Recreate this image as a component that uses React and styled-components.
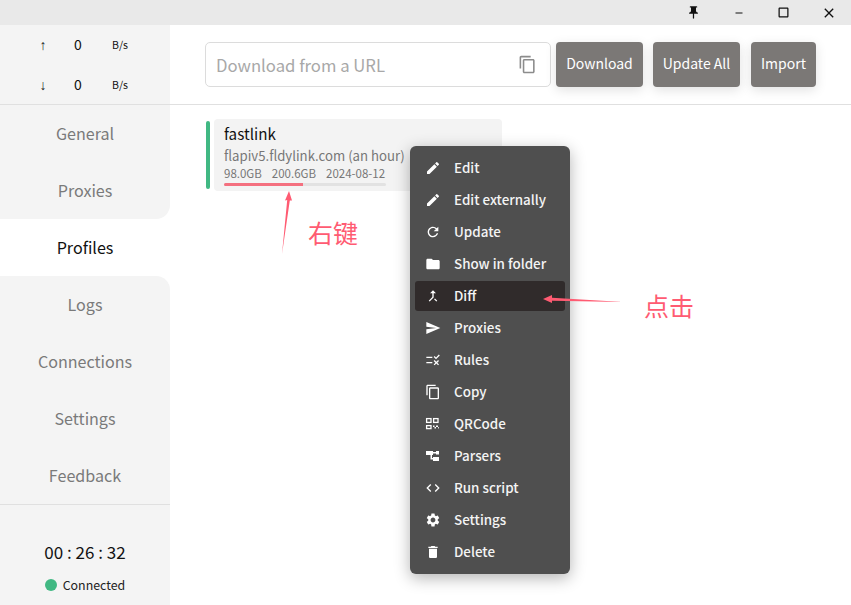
import React from 'react';
import styled, { createGlobalStyle } from 'styled-components';
import {
  MdEdit, MdRefresh, MdFolder, MdMergeType, MdSend, MdRule, MdContentCopy,
  MdCode, MdSettings, MdDelete, MdPushPin, MdCropSquare, MdClose, MdRemove,
} from 'react-icons/md';

const FONT = '"Noto Sans CJK SC", "Noto Sans", sans-serif';
const RED = '#ff5b72';

const GlobalStyle = createGlobalStyle`
  html, body { margin: 0; padding: 0; height: 100%; overflow: hidden; background: #fff; }
  body { font-family: ${FONT}; }
  * { box-sizing: border-box; }
`;

const Page = styled.div`
  position: relative;
  width: 851px;
  height: 605px;
  display: flex;
  flex-direction: column;
  overflow: hidden;
`;

const TitleBar = styled.div`
  height: 25px;
  background: #e9e9e9;
  display: flex;
  justify-content: flex-end;
  align-items: center;
  flex: none;
`;

const TitleButton = styled.div`
  width: 45px;
  display: flex;
  justify-content: center;
  align-items: center;
  color: #111;
  font-size: ${p => p.$size || 14}px;
`;

const Body = styled.div`
  flex: 1;
  display: flex;
  min-height: 0;
`;

const Sidebar = styled.aside`
  width: 170px;
  flex: none;
  display: flex;
  flex-direction: column;
  background: #fff;
`;

const Traffic = styled.div`
  height: 79px;
  background: #f4f4f4;
  display: flex;
  flex-direction: column;
  justify-content: center;
  gap: 14px;
  flex: none;
`;

const TrafficRow = styled.div`
  display: grid;
  grid-template-columns: 30px 40px 1fr;
  padding-left: 28px;
  height: 26px;
  align-items: center;
  color: #111;
`;

const TrafficArrow = styled.span`
  font-family: "Liberation Sans", sans-serif;
  font-size: 14px;
  color: #222;
  text-align: center;
`;

const TrafficValue = styled.span`
  font-size: 14px;
  text-align: center;
  padding-bottom: 2px;
`;

const TrafficUnit = styled.span`
  font-size: 10.5px;
  padding-left: 14px;
`;

const Nav = styled.nav`
  border-top: 1px solid #e0e0e0;
  border-bottom: 1px solid #e0e0e0;
  flex: none;
  display: flex;
  flex-direction: column;
`;

const NavItem = styled.div`
  height: 57px;
  display: flex;
  justify-content: center;
  align-items: center;
  padding-bottom: 2px;
  font-size: 16.1px;
  color: ${p => (p.$active ? '#111' : '#7a7a7a')};
  background: ${p => (p.$active ? '#fff' : '#f4f4f4')};
  border-bottom-right-radius: ${p => (p.$beforeActive ? '14px' : '0')};
  border-top-right-radius: ${p => (p.$afterActive ? '14px' : '0')};
`;

const SidebarFooter = styled.div`
  flex: 1;
  background: #f4f4f4;
  display: flex;
  flex-direction: column;
  align-items: center;
  padding-top: 35px;
`;

const Timer = styled.div`
  font-size: 17px;
  color: #111;
  line-height: 24px;
`;

const Status = styled.div`
  margin-top: 11px;
  display: flex;
  align-items: center;
  gap: 6px;
  font-size: 12.4px;
  line-height: 20px;
  color: #222;
`;

const Dot = styled.span`
  width: 12px;
  height: 12px;
  border-radius: 50%;
  background: #41b883;
`;

const Main = styled.main`
  flex: 1;
  display: flex;
  flex-direction: column;
  min-width: 0;
`;

const Toolbar = styled.div`
  height: 80px;
  flex: none;
  border-bottom: 1px solid #e0e0e0;
  display: flex;
  align-items: flex-start;
  padding: 17px 0 0 35px;
`;

const UrlBox = styled.div`
  width: 346px;
  height: 45px;
  border: 1px solid #dcdcdc;
  border-radius: 5px;
  display: flex;
  align-items: center;
  justify-content: space-between;
  padding: 0 13px 0 10px;
  font-size: 16.7px;
  color: #a8a8a8;
  margin-right: 5px;
  background: #fff;
`;

const CopyIcon = styled(MdContentCopy)`
  font-size: 19px;
  color: #8c8c8c;
`;

const ActionButton = styled.div`
  height: 45px;
  width: ${p => p.$width}px;
  margin-right: ${p => p.$gap || 0}px;
  padding-bottom: 3px;
  border-radius: 4px;
  background: #7b7876;
  color: #fff;
  font-size: 14px;
  display: flex;
  align-items: center;
  justify-content: center;
  box-shadow: 0 3px 12px rgba(0, 0, 0, 0.12);
`;

const Content = styled.div`
  padding: 14px 0 0 36px;
  display: flex;
  gap: 4px;
  align-items: center;
`;

const StateBar = styled.div`
  width: 4px;
  height: 68px;
  border-radius: 2px;
  background: #41b883;
`;

const ProfileCard = styled.div`
  width: 288px;
  height: 72px;
  background: #f3f3f3;
  border-radius: 4px;
  padding: 3px 10px 4px;
  display: flex;
  flex-direction: column;
`;

const ProfileName = styled.div`
  font-size: 15.2px;
  line-height: 22px;
  color: #111;
`;

const ProfileHost = styled.div`
  font-size: 13.2px;
  line-height: 20px;
  margin-top: 2px;
  color: #777;
`;

const ProfileMeta = styled.div`
  display: flex;
  gap: 10px;
  font-size: 11.5px;
  line-height: 14px;
  padding-bottom: 1px;
  color: #777;
`;

const Progress = styled.div`
  width: 162px;
  height: 3px;
  margin-top: 2px;
  background: #e2e2e2;
  border-radius: 2px;
  overflow: hidden;
`;

const ProgressFill = styled.div`
  height: 100%;
  background: #f4707f;
`;

const Menu = styled.div`
  position: absolute;
  left: 410px;
  top: 146px;
  width: 160px;
  padding: 6px 0;
  border-radius: 6px;
  background: #4f4f4f;
  box-shadow: 0 4px 16px rgba(0, 0, 0, 0.3);
  display: flex;
  flex-direction: column;
`;

const MenuItem = styled.div`
  height: 30px;
  margin: 1px 5px;
  padding-left: 10px;
  border-radius: 3px;
  background: ${p => (p.$active ? '#302b2b' : 'transparent')};
  display: flex;
  align-items: center;
  gap: 13px;
  font-size: 13.4px;
  font-weight: 500;
  color: #f4f4f4;
`;

const MenuLabel = styled.span`
  padding-bottom: 2px;
`;

const MenuIcon = styled.span`
  width: 16px;
  height: 16px;
  display: flex;
  align-items: center;
  justify-content: center;
  font-size: 16px;
  color: #fff;
`;

const Note = styled.div`
  position: absolute;
  left: ${p => p.$x}px;
  top: ${p => p.$y}px;
  font-size: 25px;
  line-height: 32px;
  color: ${RED};
  font-weight: 400;
`;

const Arrows = styled.svg`
  position: absolute;
  left: 0;
  top: 0;
  pointer-events: none;
`;

function QrIcon() {
  return (
    <svg width="16" height="16" viewBox="0 0 16 16" fill="none" stroke="currentColor" strokeWidth="1.3">
      <rect x="1.6" y="2.6" width="4.4" height="3.8" />
      <rect x="8.6" y="2.6" width="4.4" height="3.8" />
      <rect x="1.6" y="9.6" width="4.4" height="3" />
      <path d="M8 9.5h1.5v1.5H8zM11 9.5h2v1.5h-2zM9.5 11h1.5v1.5H9.5zM13 11h.8v1.5H13z" fill="currentColor" stroke="none" />
    </svg>
  );
}

function ParserIcon() {
  return (
    <svg width="16" height="16" viewBox="0 0 16 16" fill="currentColor">
      <path d="M1 3h7v4H7v3h1V9h6v4H8v-1.5H5.500V7H1zM8 4h3V3h3v3.500h-3V5.500H8z" />
    </svg>
  );
}

const menu = [
  ['Edit', MdEdit],
  ['Edit externally', MdEdit],
  ['Update', MdRefresh],
  ['Show in folder', MdFolder],
  ['Diff', MdMergeType],
  ['Proxies', MdSend],
  ['Rules', MdRule],
  ['Copy', MdContentCopy],
  ['QRCode', QrIcon],
  ['Parsers', ParserIcon],
  ['Run script', MdCode],
  ['Settings', MdSettings],
  ['Delete', MdDelete],
];

const nav = ['General', 'Proxies', 'Profiles', 'Logs', 'Connections', 'Settings', 'Feedback'];
const activeNav = 2;

export default function App() {
  return (
    <Page>
      <GlobalStyle />
      <TitleBar>
        <TitleButton $size={15}><MdPushPin /></TitleButton>
        <TitleButton $size={12}><MdRemove /></TitleButton>
        <TitleButton $size={15}><MdCropSquare /></TitleButton>
        <TitleButton $size={16}><MdClose /></TitleButton>
      </TitleBar>
      <Body>
        <Sidebar>
          <Traffic>
            <TrafficRow>
              <TrafficArrow>↑</TrafficArrow>
              <TrafficValue>0</TrafficValue>
              <TrafficUnit>B/s</TrafficUnit>
            </TrafficRow>
            <TrafficRow>
              <TrafficArrow>↓</TrafficArrow>
              <TrafficValue>0</TrafficValue>
              <TrafficUnit>B/s</TrafficUnit>
            </TrafficRow>
          </Traffic>
          <Nav>
            {nav.map((name, i) => (
              <NavItem
                key={name}
                $active={i === activeNav}
                $beforeActive={i === activeNav - 1}
                $afterActive={i === activeNav + 1}
              >
                {name}
              </NavItem>
            ))}
          </Nav>
          <SidebarFooter>
            <Timer>00 : 26 : 32</Timer>
            <Status><Dot />Connected</Status>
          </SidebarFooter>
        </Sidebar>
        <Main>
          <Toolbar>
            <UrlBox>
              Download from a URL
              <CopyIcon />
            </UrlBox>
            <ActionButton $width={87} $gap={10}>Download</ActionButton>
            <ActionButton $width={87} $gap={11}>Update All</ActionButton>
            <ActionButton $width={65}>Import</ActionButton>
          </Toolbar>
          <Content>
            <StateBar />
            <ProfileCard>
              <ProfileName>fastlink</ProfileName>
              <ProfileHost>flapiv5.fldylink.com (an hour)</ProfileHost>
              <ProfileMeta>
                <span>98.0GB</span>
                <span>200.6GB</span>
                <span>2024-08-12</span>
              </ProfileMeta>
              <Progress><ProgressFill style={{ width: `${(98 / 200.6) * 100}%` }} /></Progress>
            </ProfileCard>
          </Content>
        </Main>
      </Body>
      <Menu>
        {menu.map(([label, Icon]) => (
          <MenuItem key={label} $active={label === 'Diff'}>
            <MenuIcon><Icon /></MenuIcon>
            <MenuLabel>{label}</MenuLabel>
          </MenuItem>
        ))}
      </Menu>
      <Arrows width="851" height="605" viewBox="0 0 851 605">
        <polygon fill={RED} points="282,254 287.200,200 285,200.500 289,191 292,200.500 289.800,200.500" />
        <polygon fill={RED} points="623,302 552,300.800 552,303 543,299 552,295 552,297.800" />
      </Arrows>
      <Note $x={308} $y={216}>右键</Note>
      <Note $x={644} $y={289}>点击</Note>
    </Page>
  );
}
